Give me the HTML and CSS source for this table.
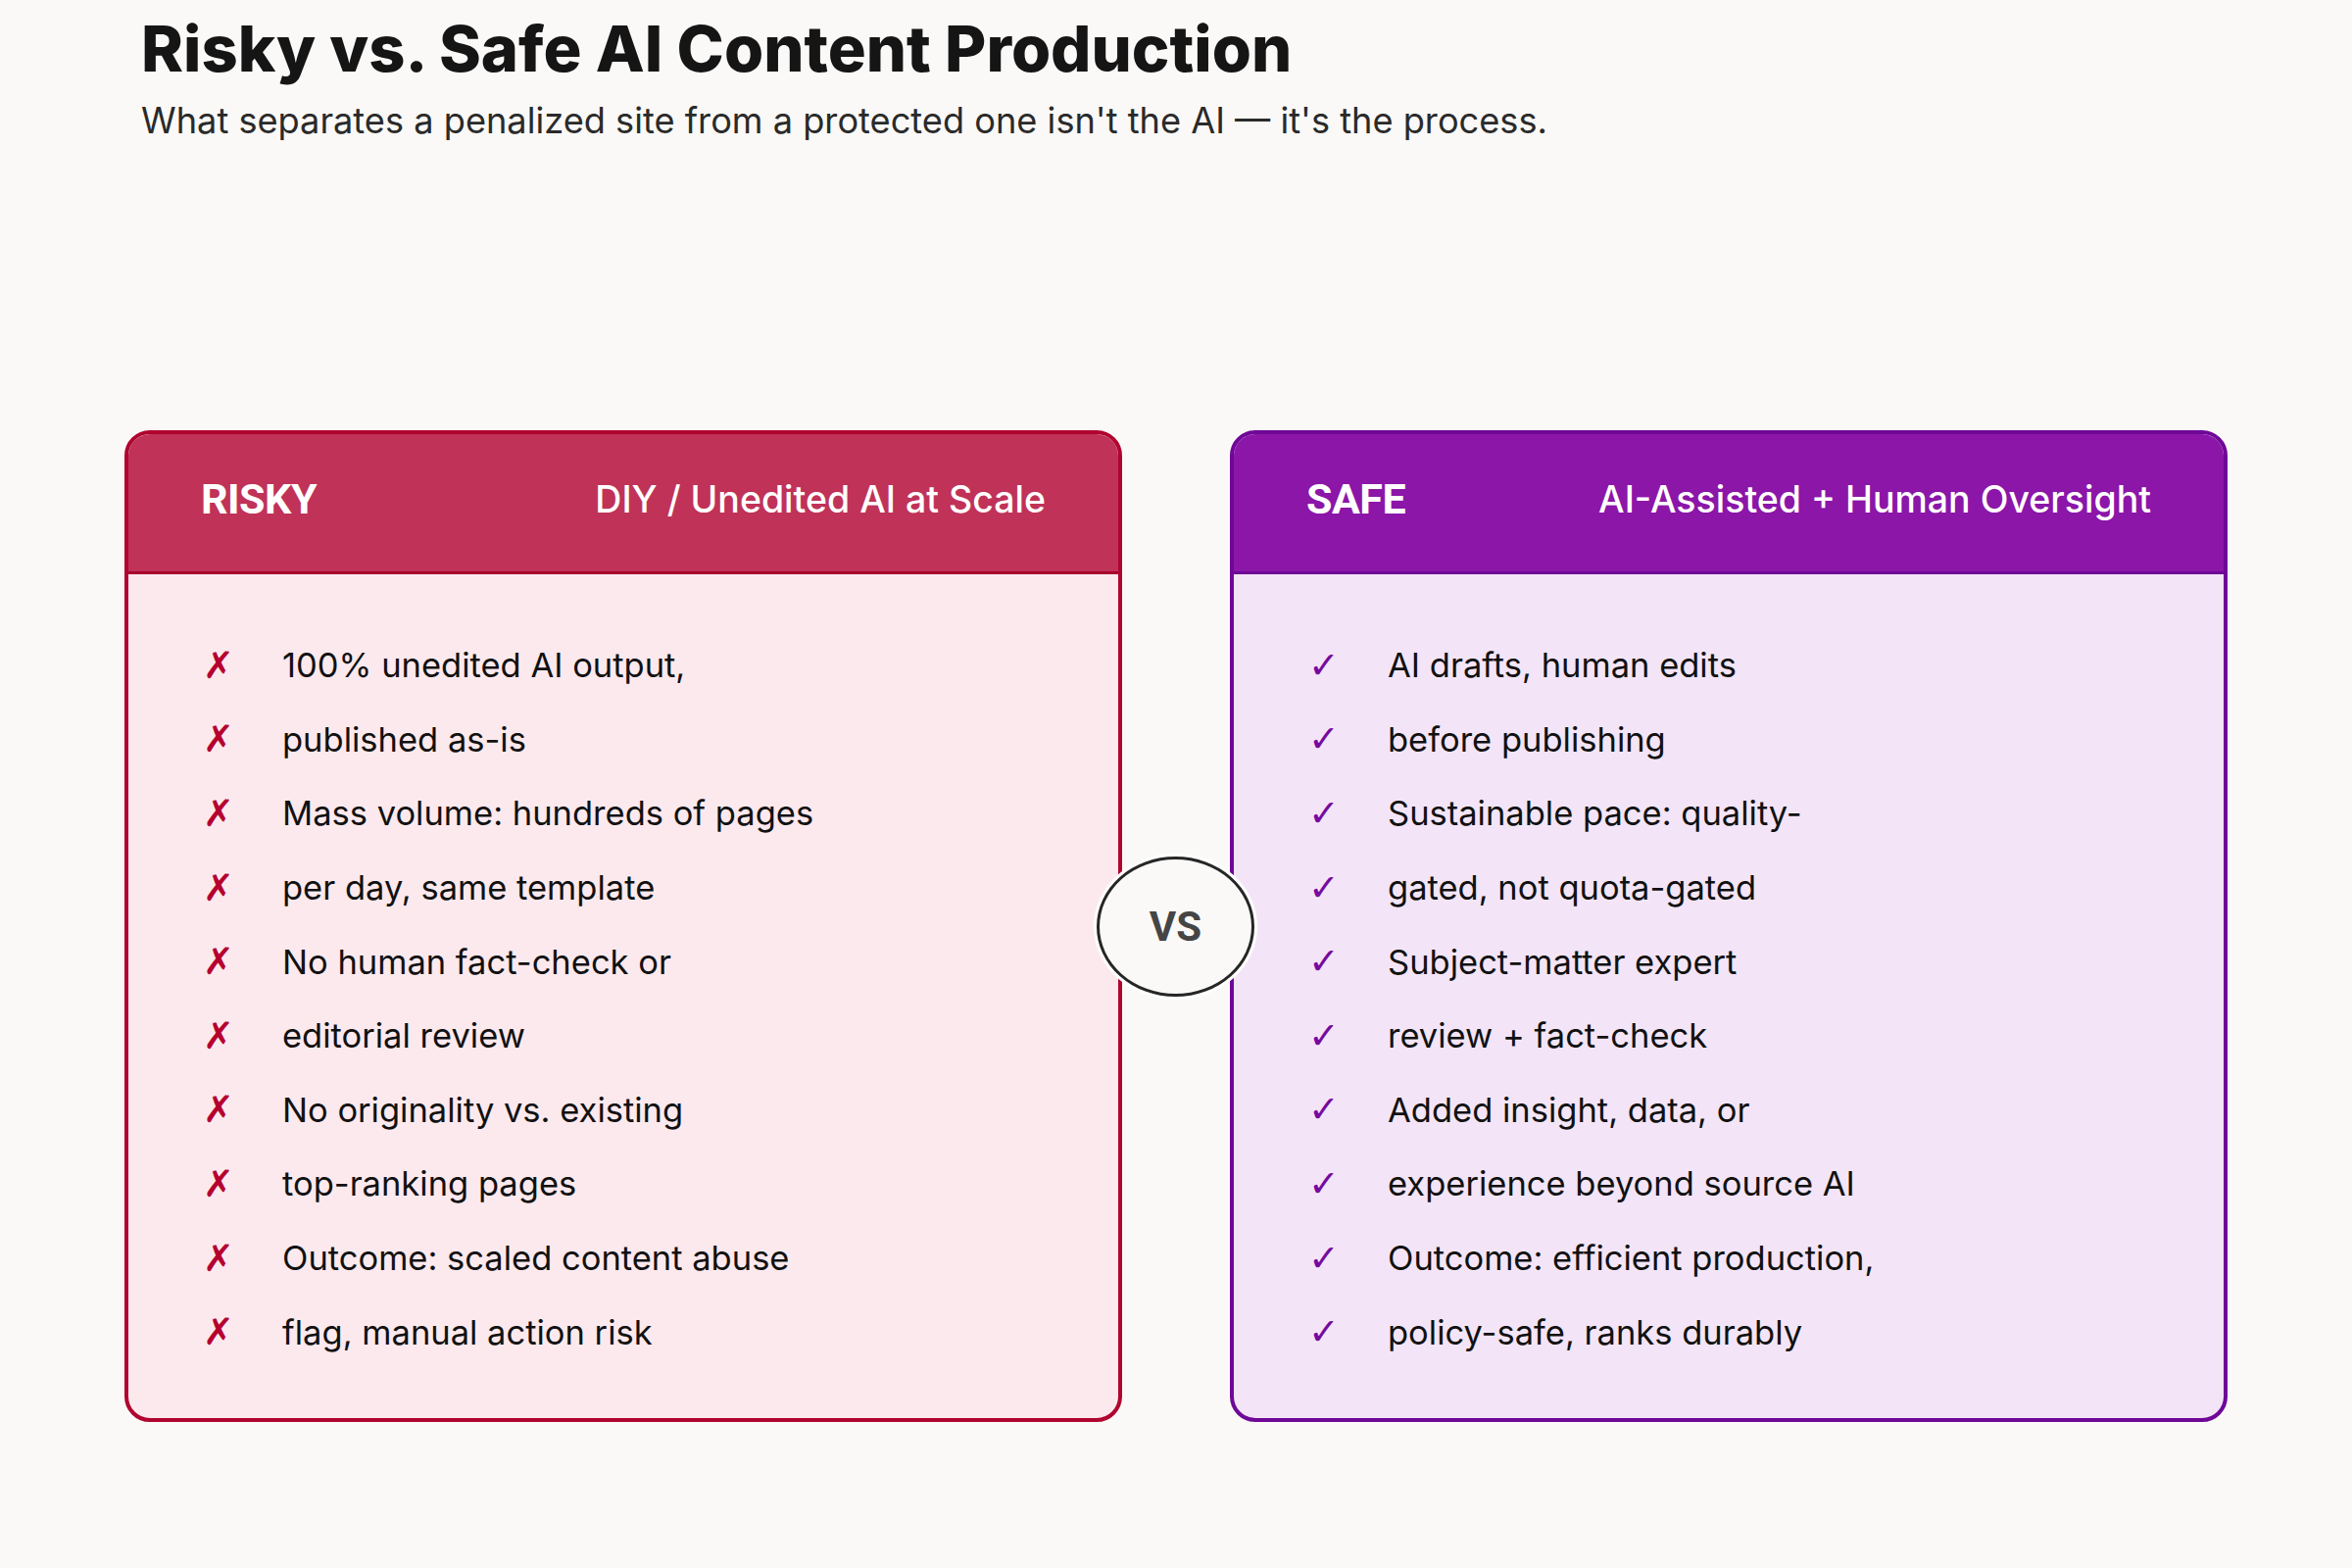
FILE: index.html
```html
<!DOCTYPE html>
<html lang="en">
<head>
<meta charset="utf-8">
<title>Risky vs. Safe AI Content Production</title>
<link rel="stylesheet" href="styles.css">
</head>
<body>
<header class="intro">
  <h1 class="title">Risky vs. Safe AI Content Production</h1>
  <p class="subtitle">What separates a penalized site from a protected one isn't the AI — it's the process.</p>
</header>
<main class="compare">
  <section class="card card-risky">
    <div class="card-head">
      <span class="card-label">RISKY</span>
      <span class="card-desc">DIY / Unedited AI at Scale</span>
    </div>
    <ul class="card-list">
      <li><span class="mark">✗</span><span>100% unedited AI output,</span></li>
      <li><span class="mark">✗</span><span>published as-is</span></li>
      <li><span class="mark">✗</span><span>Mass volume: hundreds of pages</span></li>
      <li><span class="mark">✗</span><span>per day, same template</span></li>
      <li><span class="mark">✗</span><span>No human fact-check or</span></li>
      <li><span class="mark">✗</span><span>editorial review</span></li>
      <li><span class="mark">✗</span><span>No originality vs. existing</span></li>
      <li><span class="mark">✗</span><span>top-ranking pages</span></li>
      <li><span class="mark">✗</span><span>Outcome: scaled content abuse</span></li>
      <li><span class="mark">✗</span><span>flag, manual action risk</span></li>
    </ul>
  </section>
  <div class="vs"><span>VS</span></div>
  <section class="card card-safe">
    <div class="card-head">
      <span class="card-label">SAFE</span>
      <span class="card-desc">AI-Assisted + Human Oversight</span>
    </div>
    <ul class="card-list">
      <li><span class="mark">✓</span><span>AI drafts, human edits</span></li>
      <li><span class="mark">✓</span><span>before publishing</span></li>
      <li><span class="mark">✓</span><span>Sustainable pace: quality-</span></li>
      <li><span class="mark">✓</span><span>gated, not quota-gated</span></li>
      <li><span class="mark">✓</span><span>Subject-matter expert</span></li>
      <li><span class="mark">✓</span><span>review + fact-check</span></li>
      <li><span class="mark">✓</span><span>Added insight, data, or</span></li>
      <li><span class="mark">✓</span><span>experience beyond source AI</span></li>
      <li><span class="mark">✓</span><span>Outcome: efficient production,</span></li>
      <li><span class="mark">✓</span><span>policy-safe, ranks durably</span></li>
    </ul>
  </section>
</main>
</body>
</html>
```

FILE: styles.css
```css
* { box-sizing: border-box; }

html, body {
  margin: 0;
  padding: 0;
}

body {
  width: 2400px;
  height: 1600px;
  background: #faf9f7;
  font-family: Inter, "Open Sans", sans-serif;
  color: #111;
  overflow: hidden;
}

.intro {
  padding: 12px 0 0 144px;
}

.title {
  margin: 0;
  font-size: 65px;
  font-weight: 800;
  letter-spacing: 0;
  line-height: 76px;
  color: #151515;
}

.subtitle {
  margin: 12px 0 0;
  font-size: 36.2px;
  font-weight: 400;
  line-height: 46px;
  color: #2a2a2a;
}

.compare {
  position: relative;
  display: flex;
  justify-content: center;
  gap: 110px;
  margin-top: 293px;
}

.card {
  width: 1018px;
  height: 1012px;
  border: 4px solid;
  border-radius: 26px;
  overflow: hidden;
  display: flex;
  flex-direction: column;
}

.card-risky { border-color: #b0052f; background: #fce9ee; }
.card-safe { border-color: #6f0897; background: #f3e5f7; }

.card-head {
  height: 143px;
  flex: none;
  display: flex;
  align-items: center;
  justify-content: space-between;
  padding: 0 74px 8px 74px;
  border-bottom: 3px solid;
  color: #fff;
}

.card-risky .card-head { background: #c03258; border-bottom-color: #a8062e; }
.card-safe .card-head { background: #8b16a8; border-bottom-color: #6f0897; }

.card-label {
  font-family: Roboto, "Liberation Sans", sans-serif;
  font-weight: 700;
  font-size: 43px;
  letter-spacing: -0.5px;
}

.card-desc {
  font-size: 37.5px;
  font-weight: 500;
}

.card-list {
  list-style: none;
  margin: 0;
  padding: 55px 0 0 76px;
}

.card-list li {
  display: flex;
  align-items: center;
  height: 75.6px;
  font-size: 34.5px;
  color: #111;
}

.mark {
  width: 81px;
  flex: none;
  font-family: "DejaVu Sans", sans-serif;
  font-size: 38px;
}

.card-risky .mark { color: #b5002f; }
.card-safe .mark { color: #760a9e; }

.vs {
  position: absolute;
  left: 1119px;
  top: 435px;
  width: 161px;
  height: 143px;
  border: 3px solid #262626;
  border-radius: 50%;
  background: #faf9f7;
  box-shadow: 0 0 0 3px #ffffff;
  display: flex;
  align-items: center;
  justify-content: center;
}

.vs span {
  font-family: Roboto, "Liberation Sans", sans-serif;
  font-weight: 700;
  font-size: 42px;
  color: #454545;
}
```
